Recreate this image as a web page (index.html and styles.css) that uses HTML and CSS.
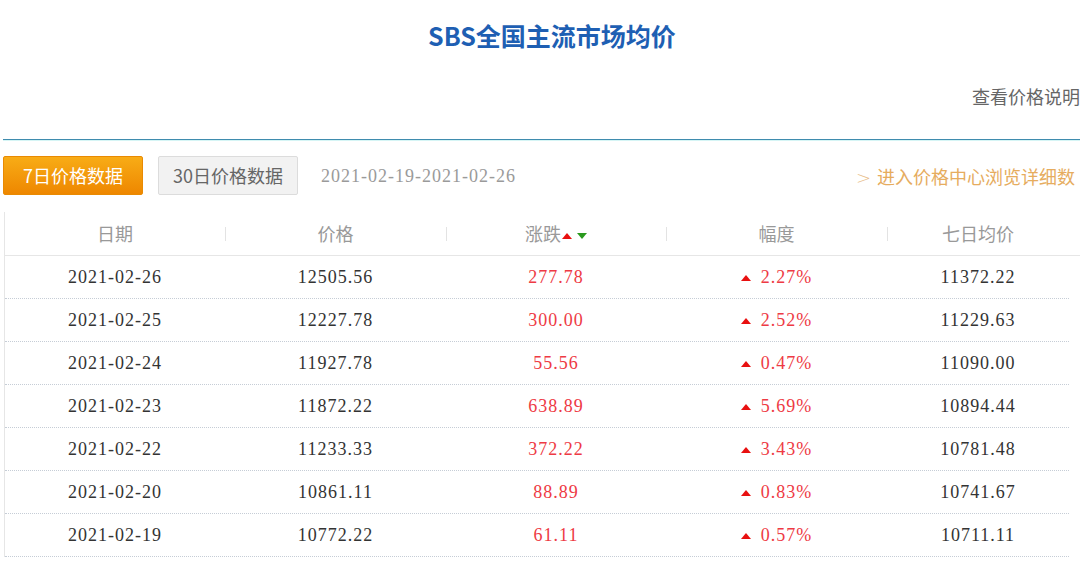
FILE: index.html
```html
<!DOCTYPE html>
<html lang="zh">
<head>
<meta charset="utf-8">
<title>SBS全国主流市场均价</title>
<link rel="stylesheet" href="styles.css">
</head>
<body>
<div class="page">
  <h1 class="title">SBS全国主流市场均价</h1>
  <div class="note"><span>查看价格说明</span></div>
  <div class="toolbar">
    <button class="btn btn-active">7日价格数据</button>
    <button class="btn btn-plain">30日价格数据</button>
    <span class="range">2021-02-19-2021-02-26</span>
    <a class="more"><span class="chev">&gt;</span>进入价格中心浏览详细数</a>
  </div>
  <div class="table">
    <div class="thead">
      <div class="th">日期</div>
      <div class="th">价格</div>
      <div class="th">涨跌<span class="sort"><i class="tri up"></i><i class="tri down"></i></span></div>
      <div class="th">幅度</div>
      <div class="th">七日均价</div>
    </div>
    <div class="row">
      <div class="td">2021-02-26</div><div class="td">12505.56</div><div class="td red">277.78</div><div class="td red"><i class="tri up"></i>2.27%</div><div class="td">11372.22</div>
    </div>
    <div class="row">
      <div class="td">2021-02-25</div><div class="td">12227.78</div><div class="td red">300.00</div><div class="td red"><i class="tri up"></i>2.52%</div><div class="td">11229.63</div>
    </div>
    <div class="row">
      <div class="td">2021-02-24</div><div class="td">11927.78</div><div class="td red">55.56</div><div class="td red"><i class="tri up"></i>0.47%</div><div class="td">11090.00</div>
    </div>
    <div class="row">
      <div class="td">2021-02-23</div><div class="td">11872.22</div><div class="td red">638.89</div><div class="td red"><i class="tri up"></i>5.69%</div><div class="td">10894.44</div>
    </div>
    <div class="row">
      <div class="td">2021-02-22</div><div class="td">11233.33</div><div class="td red">372.22</div><div class="td red"><i class="tri up"></i>3.43%</div><div class="td">10781.48</div>
    </div>
    <div class="row">
      <div class="td">2021-02-20</div><div class="td">10861.11</div><div class="td red">88.89</div><div class="td red"><i class="tri up"></i>0.83%</div><div class="td">10741.67</div>
    </div>
    <div class="row">
      <div class="td">2021-02-19</div><div class="td">10772.22</div><div class="td red">61.11</div><div class="td red"><i class="tri up"></i>0.57%</div><div class="td">10711.11</div>
    </div>
  </div>
</div>
</body>
</html>
```
FILE: styles.css
```css
* { box-sizing: border-box; }
html, body { margin: 0; padding: 0; background: #fff; }
body {
  width: 1080px;
  height: 582px;
  overflow: hidden;
  font-family: "Noto Sans CJK SC", "Noto Sans", sans-serif;
}
.page { width: 1080px; }

.title {
  margin: 0;
  height: 70px;
  line-height: 70px;
  text-align: center;
  font-size: 25px;
  font-weight: 700;
  color: #1e5fb3;
  padding-left: 24px;
}

.note {
  margin-left: 3px;
  padding: 10px 0 27px;
  height: 70px;
  line-height: 32px;
  text-align: right;
  font-size: 18px;
  color: #666;
  border-bottom: 1px solid #3f8cae;
  box-shadow: 0 1px 0 #d6f5f5;
  white-space: nowrap;
}

.toolbar {
  display: flex;
  align-items: center;
  padding: 16px 0 0 3px;
  white-space: nowrap;
}
.toolbar > * { flex-shrink: 0; }
.btn {
  width: 140px;
  height: 39px;
  margin: 0;
  padding: 0;
  border-radius: 2px;
  font-family: "Noto Sans CJK SC", sans-serif;
  font-size: 18px;
  line-height: 37px;
  cursor: pointer;
}
.btn-active {
  color: #fff;
  border: 1px solid #e98a02;
  background: linear-gradient(#f8ac16, #ee8700);
}
.btn-plain {
  margin-left: 15px;
  color: #666;
  border: 1px solid #dcdcdc;
  background: #f2f2f2;
}
.range {
  margin-left: 23px;
  margin-top: 2px;
  font-family: "Liberation Serif", serif;
  font-size: 18px;
  letter-spacing: 1px;
  color: #9a9a9a;
}
.more {
  margin-left: 340px;
  font-size: 18px;
  color: #e6ac5e;
}
.chev {
  font-family: "DejaVu Sans", sans-serif;
  font-weight: 200;
  color: #e9bd88;
  margin-right: 6px;
}

.table {
  margin-top: 17px;
  margin-left: 4px;
  border-left: 1px solid #e6e6e6;
}
.thead {
  display: grid;
  grid-template-columns: 220px 221px 220px 221px 182px;
  height: 44px;
  align-items: center;
  border-bottom: 1px solid #e6e6e6;
  width: 1076px;
}
.th {
  position: relative;
  text-align: center;
  font-size: 18px;
  color: #999;
  line-height: 43px;
}
.th + .th::before {
  content: "";
  position: absolute;
  left: 0;
  top: 15px;
  width: 1px;
  height: 14px;
  background: #e3e3e3;
}
.sort {
  display: inline-flex;
  align-items: center;
  gap: 5px;
  margin-left: 1px;
  vertical-align: middle;
}
.tri {
  display: inline-block;
  width: 0;
  height: 0;
  border-left: 5px solid transparent;
  border-right: 5px solid transparent;
}
.tri.up { border-bottom: 6px solid #e81010; }
.tri.down { border-top: 6px solid #2a9a1e; }

.row {
  display: grid;
  grid-template-columns: 220px 221px 220px 221px 182px;
  width: 1064px;
  height: 43px;
  align-items: center;
  border-bottom: 1px dotted #c6cdd6;
}
.td {
  text-align: center;
  font-family: "Liberation Serif", serif;
  font-size: 18px;
  letter-spacing: 1px;
  color: #333;
}
.td.red { color: #ee3a44; }
.td .tri.up {
  margin-right: 10px;
  vertical-align: 2px;
}
```
